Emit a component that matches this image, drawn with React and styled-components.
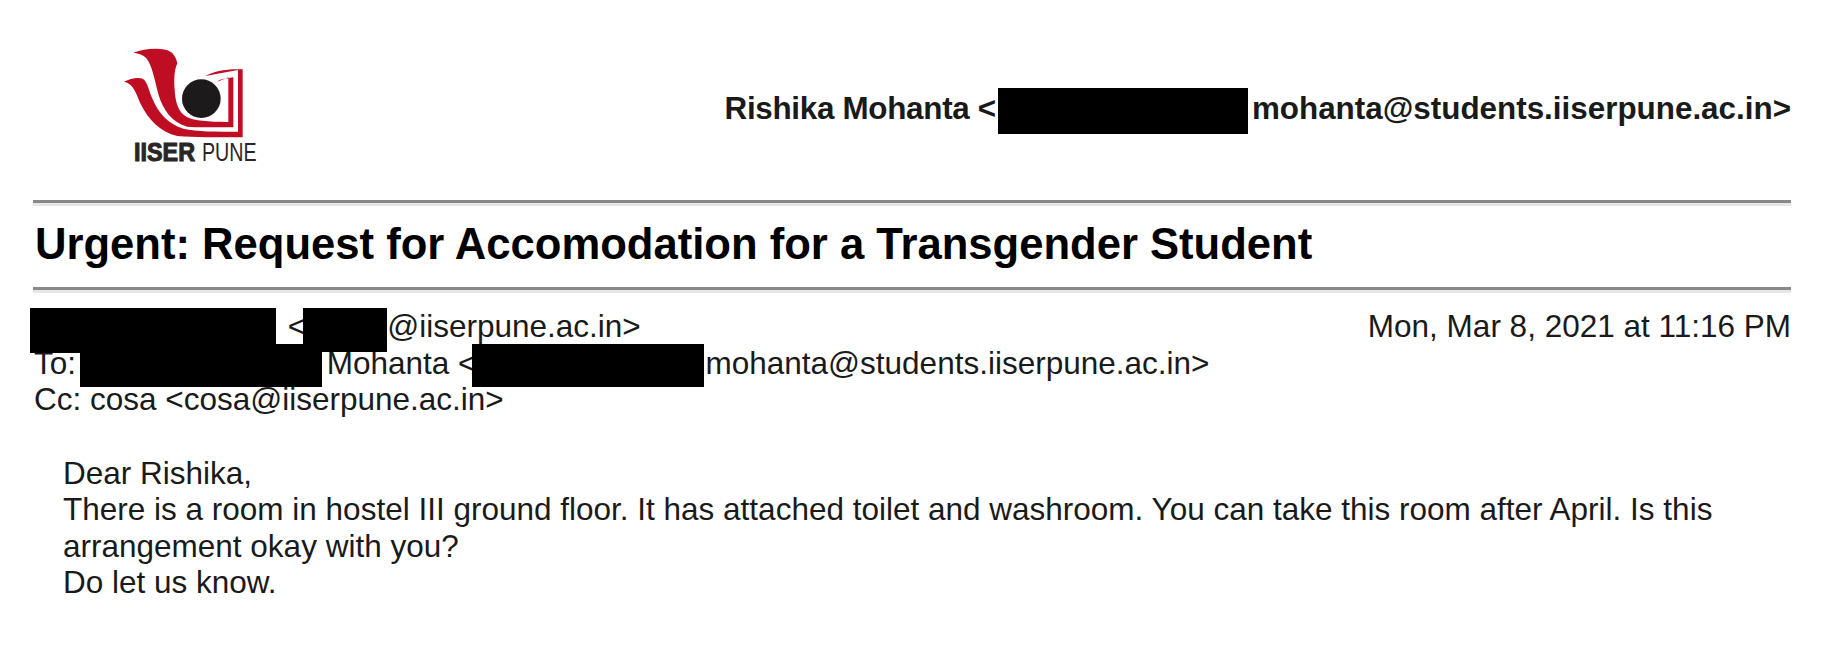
import React from 'react'
import styled, { createGlobalStyle } from 'styled-components'

const GlobalStyle = createGlobalStyle`
    html, body {
        margin: 0;
        padding: 0;
        background: #fff;
    }
`;

export default function App() {
    return (
        <>
            <GlobalStyle />
            <Page>
                <Header>
                    <LogoBox>
                        <Logo />
                    </LogoBox>
                    <Account>
                        <Name>Rishika Mohanta &lt;</Name>
                        <Redacted $w={250} $top={-31} $h={46} $ml={2} $mr={4} />
                        mohanta@students.iiserpune.ac.in&gt;
                    </Account>
                </Header>
                <Rule />
                <Subject>Urgent: Request for Accomodation for a Transgender Student</Subject>
                <Rule />
                <Meta>
                    <MetaRow>
                        <span>
                            <Redacted $w={246} $top={-29} $h={45} $ml={-4} />
                            <Gap /> &lt;
                            <Redacted $w={84} $top={-29} $h={44} $ml={-3} />
                            @iiserpune.ac.in&gt;
                        </span>
                        <span>Mon, Mar 8, 2021 at 11:16 PM</span>
                    </MetaRow>
                    <MetaRow>
                        <span>
                            To: <Redacted $w={242} $top={-30} $h={43} $ml={-5} $mr={5} />
                            Mohanta &lt;
                            <Redacted $w={232} $top={-30} $h={43} $ml={-5} $mr={2} />
                            mohanta@students.iiserpune.ac.in&gt;
                        </span>
                    </MetaRow>
                    <MetaRow>
                        <span>Cc: cosa &lt;cosa@iiserpune.ac.in&gt;</span>
                    </MetaRow>
                </Meta>
                <Body>
                    Dear Rishika,<br />
                    There is a room in hostel III ground floor. It has attached toilet and washroom. You can take this room after April. Is this arrangement okay with you?<br />
                    Do let us know.
                </Body>
            </Page>
        </>
    )
}

function Logo() {
    return (
        <svg width="200" height="150" viewBox="0 0 600 450">
            <path fill="#bf0d23" d="M100 68C130 58 165 52 200 60C220 66 228 82 232 100C222 122 222 150 224 180C226 215 234 248 262 262C285 272 320 276 385 276L385 142L352 155C360 148 372 146 400 142L400 292C340 292 290 292 262 290C215 278 190 240 176 196C164 150 156 105 140 86C130 74 115 70 100 68Z" />
            <path fill="#bf0d23" d="M72 155C90 146 112 141 128 146C142 154 146 180 158 208C172 242 200 282 250 296C290 305 350 305 414 305L414 120L316 138C340 124 380 116 428 118L428 322C350 322 280 322 232 318C180 306 146 270 122 222C108 190 100 160 72 155Z" />
            <circle cx="304" cy="206" r="58" fill="#1d1a1c" />
            <LogoMark x="102" y="392" textLength="183" lengthAdjust="spacingAndGlyphs" $bold>IISER</LogoMark>
            <LogoMark x="306" y="392" textLength="164" lengthAdjust="spacingAndGlyphs">PUNE</LogoMark>
        </svg>
    )
}

const Page = styled.div`
    width: 1836px;
    height: 652px;
    box-sizing: border-box;
    padding: 0 45px 0 33px;
    font-family: "Liberation Sans", Arial, sans-serif;
    color: #000;
    overflow: hidden;
`;

const Header = styled.header`
    height: 200px;
    display: flex;
    justify-content: space-between;
    align-items: flex-start;
`;

const LogoBox = styled.div`
    margin: 30px 0 0 67px;
    height: 150px;
`;

const LogoMark = styled.text`
    font-family: "Liberation Sans", Arial, sans-serif;
    font-size: 75px;
    font-weight: ${props => props.$bold ? 700 : 400};
    fill: #2a2527;
    stroke: #2a2527;
    stroke-width: ${props => props.$bold ? 3 : 0};
`;

const Account = styled.div`
    margin-top: 91px;
    font-size: 31.4px;
    line-height: 36px;
    font-weight: 700;
    color: #1a1a1a;
    white-space: nowrap;
`;

const Name = styled.span`
    letter-spacing: -0.3px;
`;

const Rule = styled.hr`
    margin: 0;
    height: 3px;
    border: 0;
    background: #888;
    border-bottom: 3px solid #e6e6e6;
`;

const Subject = styled.h1`
    margin: 0;
    height: 81px;
    padding-left: 2px;
    font-size: 43.6px;
    line-height: 77px;
    font-weight: 700;
`;

const Meta = styled.div`
    margin-top: 15px;
    padding-left: 1px;
    font-size: 31.5px;
    line-height: 36.5px;
    color: #1a1a1a;
`;

const MetaRow = styled.div`
    display: flex;
    justify-content: space-between;
    white-space: nowrap;
`;

const Redacted = styled.span`
    display: inline-block;
    position: relative;
    width: ${props => props.$w}px;
    height: 0;
    margin-left: ${props => props.$ml || 0}px;
    margin-right: ${props => props.$mr || 0}px;
    &::before {
        content: "";
        position: absolute;
        left: 0;
        right: 0;
        top: ${props => props.$top}px;
        height: ${props => props.$h}px;
        background: #000;
    }
`;

const Gap = styled.span`
    display: inline-block;
    width: 3px;
`;

const Body = styled.div`
    margin-top: 37px;
    padding-left: 30px;
    font-size: 31.5px;
    line-height: 36.5px;
    color: #1a1a1a;
`;
